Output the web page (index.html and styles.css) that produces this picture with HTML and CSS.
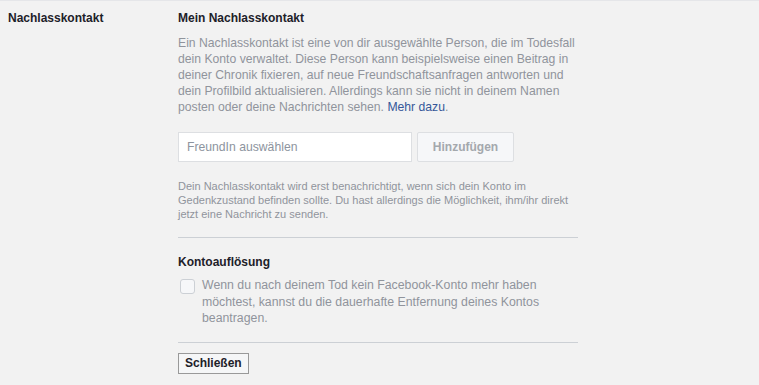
FILE: index.html
```html
<!DOCTYPE html>
<html lang="de">
<head>
    <meta charset="UTF-8">
    <title>Nachlasskontakt</title>
    <link rel="stylesheet" href="styles.css">
</head>
<body>
    <div class="settings-row">
        <div class="row-label">Nachlasskontakt</div>
        <div class="row-content">
            <h3 class="section-title">Mein Nachlasskontakt</h3>
            <p class="intro">Ein Nachlasskontakt ist eine von dir ausgewählte Person, die im Todesfall dein Konto verwaltet. Diese Person kann beispielsweise einen Beitrag in deiner Chronik fixieren, auf neue Freundschaftsanfragen antworten und dein Profilbild aktualisieren. Allerdings kann sie nicht in deinem Namen posten oder deine Nachrichten sehen. <a href="#" class="link">Mehr dazu</a>.</p>
            <div class="picker">
                <input class="friend-input" type="text" placeholder="FreundIn auswählen">
                <button class="btn-add" disabled>Hinzufügen</button>
            </div>
            <p class="note">Dein Nachlasskontakt wird erst benachrichtigt, wenn sich dein Konto im Gedenkzustand befinden sollte. Du hast allerdings die Möglichkeit, ihm/ihr direkt jetzt eine Nachricht zu senden.</p>
            <div class="divider"></div>
            <h3 class="section-title second">Kontoauflösung</h3>
            <label class="check-row">
                <span class="checkbox"></span>
                <span class="check-text">Wenn du nach deinem Tod kein Facebook-Konto mehr haben möchtest, kannst du die dauerhafte Entfernung deines Kontos beantragen.</span>
            </label>
            <div class="divider last"></div>
            <button class="btn-close">Schließen</button>
        </div>
    </div>
</body>
</html>
```

FILE: styles.css
```css
body {
    margin: 0;
    padding: 0;
    background: #f2f2f2;
    border-top: 1px solid #e5e6e9;
    font-family: "Liberation Sans", Arial, sans-serif;
    font-size: 12px;
    color: #1d2129;
}
.settings-row {
    display: grid;
    grid-template-columns: 170px 400px;
    padding: 9px 8px;
}
.row-label {
    font-weight: bold;
    line-height: 16px;
}
.row-content {
    display: flex;
    flex-direction: column;
}
.section-title {
    margin: 0;
    font-size: 12px;
    font-weight: bold;
    line-height: 16px;
    color: #1d2129;
}
.section-title.second {
    margin-top: 16px;
}
.intro {
    margin: 9px 0 0;
    font-size: 12.2px;
    line-height: 16px;
    color: #90949c;
}
.link {
    color: #365899;
    text-decoration: none;
}
.picker {
    display: flex;
    gap: 5px;
    margin-top: 17px;
}
.friend-input {
    box-sizing: border-box;
    width: 234px;
    height: 30px;
    padding: 0 8px;
    border: 1px solid #dddfe2;
    background: #fff;
    font-family: inherit;
    font-size: 12.2px;
    color: #1d2129;
    outline: none;
}
.friend-input::placeholder {
    color: #8d949e;
}
.btn-add {
    box-sizing: border-box;
    width: 97px;
    height: 30px;
    border: 1px solid #dddfe2;
    border-radius: 2px;
    background: #f6f7f9;
    font-family: inherit;
    font-size: 12px;
    font-weight: bold;
    color: #a4a8ad;
}
.note {
    margin: 17px 0 0;
    font-size: 11px;
    line-height: 14px;
    color: #90949c;
}
.divider {
    height: 1px;
    background: #ccd0d5;
    margin-top: 16px;
}
.divider.last {
    margin-top: 15px;
}
.check-row {
    display: flex;
    gap: 7px;
    margin-top: 7px;
    padding-left: 2px;
}
.checkbox {
    flex: none;
    box-sizing: border-box;
    width: 15px;
    height: 15px;
    margin-top: 2px;
    border: 1px solid #ccd0d5;
    border-radius: 3px;
    background: #f6f7f9;
}
.check-text {
    font-size: 12.3px;
    line-height: 16.5px;
    color: #90949c;
}
.btn-close {
    margin-top: 10px;
    align-self: flex-start;
    height: 21px;
    padding: 0 6px;
    border: 1px solid #999;
    background: #f5f6f7;
    font-family: inherit;
    font-size: 12px;
    font-weight: bold;
    color: #1d2129;
}
```
